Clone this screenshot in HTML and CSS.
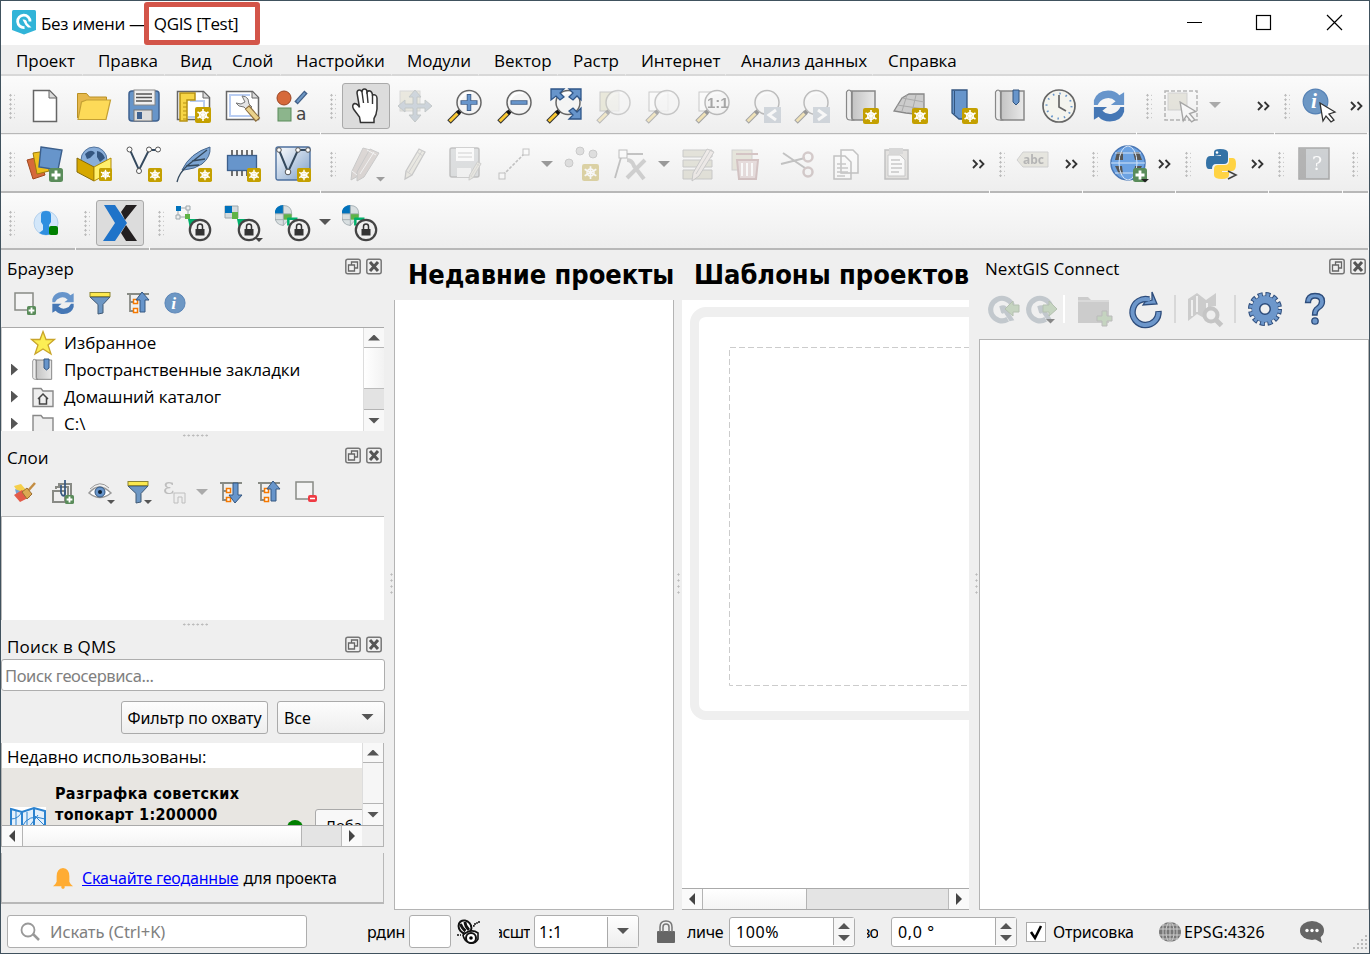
FILE: index.html
```html
<!DOCTYPE html>
<html lang="ru">
<head>
<meta charset="utf-8">
<title>QGIS</title>
<link rel="stylesheet" href="styles.css">
</head>
<body>
<svg width="0" height="0" class="defs">
  <defs>
    <linearGradient id="gb" x1="0" y1="0" x2="1" y2="1"><stop offset="0" stop-color="#fff"/><stop offset="1" stop-color="#7d9fc9"/></linearGradient>
    <linearGradient id="gg" x1="0" y1="0" x2="1" y2="0"><stop offset="0" stop-color="#bbb"/><stop offset="1" stop-color="#e9e9e9"/></linearGradient>
    <symbol id="new" viewBox="0 0 16 16"><rect width="16" height="16" rx="2" fill="#c4a000"/><path d="M8 2v12M2.500 5l11 6M13.500 5l-11 6" stroke="#fff" stroke-width="1.600"/><circle cx="8" cy="8" r="3.300" fill="none" stroke="#fff" stroke-width="1.400"/></symbol>
    <symbol id="plus" viewBox="0 0 14 14"><rect width="14" height="14" rx="2.500" fill="#5a8c5a"/><path d="M7 2.500v9M2.500 7h9" stroke="#fff" stroke-width="2.800"/></symbol>
    <symbol id="lens" viewBox="0 0 36 36"><path d="M2 34l10-10" stroke="#333" stroke-width="5"/><path d="M2.700 33.300l8-8" stroke="#fcca33" stroke-width="3"/><path d="M10.500 25.500l4-4" stroke="#111" stroke-width="4"/><circle cx="22" cy="14.500" r="12" fill="#f4f4f4" stroke="#666" stroke-width="1.500"/><path d="M13 12q4-9 13-7" stroke="#fff" stroke-width="2" fill="none"/></symbol>
    <symbol id="lock" viewBox="0 0 24 24"><circle cx="12" cy="12" r="10.200" fill="#efefef" stroke="#444" stroke-width="2.200"/><rect x="7.500" y="11" width="9" height="6.500" fill="#333"/><path d="M9.500 11V8.500a2.500 2.500 0 0 1 5 0V11" fill="none" stroke="#333" stroke-width="1.500"/></symbol>
    <symbol id="sync" viewBox="0 0 36 36"><path d="M2 12Q5 2 17 1.500q8 0 12 5l5-3V17H20l5-4q-5-5-11-3-6 2-8 7H2z" fill="#6795cb"/><path d="M34 24Q31 34 19 34.500q-8 0-12-5l-5 3V19h14l-5 4q5 5 11 3 6-2 8-7h4z" fill="#4577b5"/></symbol>
    <symbol id="tree" viewBox="0 0 24 24"><path d="M1 3h22M4 3v17h5M4 11h5" fill="none" stroke="#888b85" stroke-width="1.800"/><rect x="7.500" y="8.500" width="4" height="4" fill="#fff" stroke="#f57900" stroke-width="1.500"/><rect x="7.500" y="17.500" width="4" height="4" fill="#fff" stroke="#f57900" stroke-width="1.500"/></symbol>
    <symbol id="funnel" viewBox="0 0 24 24"><path d="M2 6h20l-7 7.500V22l-5 1v-9.500z" fill="#6d97c4" stroke="#415a75"/><rect x="2" y="1.500" width="20" height="4" fill="#fce94f" stroke="#8d8633"/></symbol>
    <symbol id="book" viewBox="0 0 36 36"><path d="M3 3h28v29H8V3z" fill="url(#gg)" stroke="#888" stroke-width="1.500"/><path d="M2.500 4q2.500-4 5 0v25q0 3 3 3H6q-3 0-3.500-3z" fill="#eee" stroke="#888" stroke-width="1.200"/></symbol>
    <symbol id="info" viewBox="0 0 24 24"><circle cx="12" cy="12" r="11" fill="#6d97c4" stroke="#5480b4"/><text x="8" y="18" font-family="Liberation Serif, serif" font-style="italic" font-weight="bold" font-size="19" fill="#fff">i</text></symbol>
    <symbol id="cursor" viewBox="0 0 18 22"><path d="M1 1l15 9-6 2 5 6-3 2-5-6-3 5z" fill="#fff" stroke="#333" stroke-width="1.300"/></symbol>
    <symbol id="float" viewBox="0 0 16 16"><rect x=".8" y=".8" width="14.400" height="14.400" rx="2" fill="none" stroke="#777" stroke-width="1.500"/><path d="M6.500 6V3.500h6v6H10M3.500 6.500h6v6h-6z" fill="none" stroke="#666" stroke-width="1.300"/></symbol>
    <symbol id="close" viewBox="0 0 16 16"><rect x=".8" y=".8" width="14.400" height="14.400" rx="2" fill="none" stroke="#777" stroke-width="1.500"/><path d="M4 3.500l8 9M12 3.500l-8 9" stroke="#555" stroke-width="3"/></symbol>
    <symbol id="pencil" viewBox="0 0 36 36"><path d="M9 25L22 3l6 3-13 23-7 4z" fill="#d9d5c0" stroke="#888" stroke-width="1.300"/><path d="M12 26L25 5M9 25l6 4M20 6l6 4" stroke="#999"/></symbol>
    <symbol id="ngq" viewBox="0 0 34 34"><path d="M22 28A12 12 0 1 1 27 13" fill="none" stroke="#c2c8cd" stroke-width="5.500"/><path d="M13 14q8-3 9 4l7 11-5 1-6-9q-1 2-3 0z" fill="#c2c8cd"/></symbol>
    <symbol id="half" viewBox="0 0 36 36"><path d="M0 13A10 10 0 0 1 10 3q10 0 10 10v3L10 27Q0 26 0 16z" fill="#d9dfe1" stroke="#9ca7ac"/><path d="M10 2.500V13H-.5Q0 3 10 2.500z" fill="#0072bc"/><path d="M10 13h10v7H10z" fill="#5fb346"/><path d="M10 3v24M0 13h20M0 20h10" stroke="#9ca7ac"/><path d="M15 19h12M16 18v9" stroke="#00b06b" stroke-width="3"/></symbol>
  </defs>
</svg>

<div class="window">
  <header class="titlebar">
    <svg class="logo" width="24" height="25" viewBox="0 0 24 25"><path d="M0 1.500Q0 0 1.500 0h21Q24 0 24 1.500V20l-12 4.500L0 20z" fill="#31b4d8"/><path d="M12.500 17.500A6.200 6.200 0 1 1 18 11.500" fill="none" stroke="#fff" stroke-width="2.800"/><path d="M10.500 9.500q4.500-.5 4.500 3.500l4.500 4.500H16L13.500 15z" fill="#fff"/></svg>
    <span class="caption">Без имени —&nbsp; QGIS [Test]</span>
    <svg class="winbtns" width="160" height="24" viewBox="0 0 160 24"><path d="M2 11.500h15" stroke="#000"/><rect x="71.500" y="4.500" width="14" height="14" fill="none" stroke="#000" stroke-width="1.200"/><path d="M142 4l15 15M157 4l-15 15" stroke="#000" stroke-width="1.200"/></svg>
    <div class="highlight"></div>
  </header>

  <nav class="menubar">
    <span class="m1">Проект</span><span class="m1">Правка</span><span class="m2">Вид</span><span class="m3">Слой</span><span class="m4">Настройки</span><span class="m5">Модули</span><span class="m6">Вектор</span><span class="m7">Растр</span><span class="m8">Интернет</span><span class="m9">Анализ данных</span><span class="m10">Справка</span>
  </nav>

  <div class="toolrow row1">
    <div class="bar w321"><i class="grip"></i>
      <b class="cell"><svg viewBox="0 0 36 36"><path d="M6.500 2.500h16l7 7v24h-23z" fill="#fff" stroke="#666" stroke-width="1.500"/><path d="M22 3v7h7" fill="#ddd" stroke="#666"/></svg></b>
      <b class="cell"><svg viewBox="0 0 36 36"><path d="M1.500 30V5.500h9l3 3.500h17v20" fill="#e6b84c" stroke="#b88f24"/><path d="M2 31.500L5.500 14l5-2h24l-4.500 19.500z" fill="#fdda58" stroke="#c4a034" stroke-width="1.200"/></svg></b>
      <b class="cell"><svg viewBox="0 0 36 36"><rect x="3" y="3" width="30" height="30" rx="3" fill="#6795c9" stroke="#3f6290" stroke-width="1.500"/><rect x="8" y="2" width="21" height="15" fill="#f0f0f0" stroke="#888"/><path d="M10 6h16M10 9.500h16M10 13h16" stroke="#555" stroke-width="1.500"/><rect x="8" y="22" width="18" height="11" fill="#ddd" stroke="#777"/><rect x="11" y="24" width="5" height="7" fill="#3f6290"/></svg></b>
      <b class="cell"><svg viewBox="0 0 36 36"><path d="M1.500 3.500h26l6 6v22h-32z" fill="#fff" stroke="#666" stroke-width="1.500"/><path d="M27 4v6h6" fill="#ddd" stroke="#666"/><path d="M14 13h14v16H12" stroke="#b9cdf2" stroke-width="2" fill="none"/><path d="M4 5h15v7h-8v21H4z" fill="#f7d546" stroke="#b79112" stroke-width="1.500"/><path d="M7 15h4M7 19h4M7 23h4M7 27h4M7 31h4" stroke="#b79112"/><use href="#new" x="19" y="19" width="16" height="16"/></svg></b>
      <b class="cell"><svg viewBox="0 0 36 36"><path d="M1.500 3.500h26l6 6v22h-32z" fill="#fff" stroke="#666" stroke-width="1.500"/><path d="M27 4v6h6" fill="#ddd" stroke="#666"/><path d="M25 7H5v21h21" stroke="#b9cdf2" stroke-width="2" fill="none"/><path d="M17 8q4 0 6 3l1 5 3 3-5 3-3-3q-6 0-8-4l5 1 4-2z" fill="#e4e4e4" stroke="#777"/><path d="M22 19l11 13" stroke="#8b6d3e" stroke-width="6"/><path d="M22.500 20l10 11" stroke="#ead28b" stroke-width="4"/></svg></b>
      <b class="cell"><svg viewBox="0 0 36 36"><circle cx="9" cy="10" r="7" fill="#d6693a" stroke="#9b4522"/><path d="M21 15L31 4" stroke="#415f88" stroke-width="4.500"/><path d="M22 14l8-9" stroke="#6d97c4" stroke-width="2"/><rect x="3" y="20" width="13" height="13" fill="#8cb58c" stroke="#5a8c5a"/><text x="21" y="32" font-family="DejaVu Sans" font-weight="normal" font-size="17" fill="#444">a</text></svg></b>
    </div>
    <div class="bar w816"><i class="grip"></i>
      <b class="cell pressed"><svg viewBox="0 0 36 36"><path d="M12.500 34.500L11.500 29 5.500 21q-2-4 1-5.500 3 0 5 4L9 5q0-3 2.500-3 1.500 0 2.500 2 0-3 2.500-3T19 4q1-1.500 3-1 2 .5 2.500 4 4-1 4.500 3v11q-.500 6-3 9.500v4z" fill="#fff" stroke="#333" stroke-width="1.500"/><path d="M14 4l1.500 11M19 4l1 11M24.500 7v9" stroke="#333" stroke-width="1.400"/></svg></b>
      <b class="cell dim"><svg viewBox="0 0 36 36"><rect x="3" y="3" width="20" height="20" fill="#d8d5b4" stroke="#aaa"/><path d="M18 2l6 7h-4v7h8v-4l7 6-7 6v-4h-8v7h4l-6 7-6-7h4v-7H8v4l-7-6 7-6v4h8V9h-4z" fill="#8fa6bf" stroke="#788"/></svg></b>
      <b class="cell"><svg viewBox="0 0 36 36"><use href="#lens" width="36" height="36"/><path d="M22 6v17M13.500 14.500h17" stroke="#415f88" stroke-width="4.500"/><path d="M22 7v15M14.500 14.500h15" stroke="#6795cb" stroke-width="2.800"/></svg></b>
      <b class="cell"><svg viewBox="0 0 36 36"><use href="#lens" width="36" height="36"/><path d="M13.500 14.500h17" stroke="#415f88" stroke-width="4.500"/><path d="M14.500 14.500h15" stroke="#6795cb" stroke-width="2.800"/></svg></b>
      <b class="cell"><svg viewBox="0 0 36 36"><use href="#lens" width="36" height="36"/><path d="M5 1h13l-4 4 4 4-4 3-4-4-5 4zM35 1H23l4 4-4 4 4 3 4-4 4 4zM35 31H23l4-4-4-4 4-3 4 4 4-4z" fill="#6795cb" stroke="#2f5688" stroke-width="1.300"/></svg></b>
      <b class="cell dim"><svg viewBox="0 0 36 36"><rect x="4" y="4" width="19" height="19" fill="#d8d5a4" stroke="#888"/><use href="#lens" width="36" height="36" opacity=".7"/></svg></b>
      <b class="cell dim"><svg viewBox="0 0 36 36"><rect x="4" y="4" width="19" height="19" fill="#fff" stroke="#888"/><use href="#lens" width="36" height="36" opacity=".8"/></svg></b>
      <b class="cell dim"><svg viewBox="0 0 36 36"><rect x="4" y="4" width="19" height="19" fill="#fff" stroke="#888"/><use href="#lens" width="36" height="36"/><text x="12" y="20" font-family="Liberation Sans" font-weight="bold" font-size="15" fill="#333">1:1</text></svg></b>
      <b class="cell dim"><svg viewBox="0 0 36 36"><use href="#lens" width="36" height="36"/><rect x="19" y="19" width="17" height="16" fill="#99acc0"/><path d="M31 22l-7 5 7 5" fill="none" stroke="#fff" stroke-width="3"/></svg></b>
      <b class="cell dim"><svg viewBox="0 0 36 36"><use href="#lens" width="36" height="36"/><rect x="19" y="19" width="17" height="16" fill="#99acc0"/><path d="M24 22l7 5-7 5" fill="none" stroke="#fff" stroke-width="3"/></svg></b>
      <b class="cell"><svg viewBox="0 0 36 36"><use href="#book" width="36" height="36"/><use href="#new" x="19" y="20" width="16" height="16"/></svg></b>
      <b class="cell"><svg viewBox="0 0 36 36"><path d="M1 23l8-13 7-4h15v21L13 25z" fill="#ccc" stroke="#888" stroke-width="1.300"/><path d="M9 10l22 4M4 17l27 4M14 7l-5 16M23 7l-4 17" stroke="#aaa"/><use href="#new" x="19" y="20" width="16" height="16"/></svg></b>
      <b class="cell"><svg viewBox="0 0 36 36"><path d="M9 2h15v29h-8L9 25z" fill="#6795cb" stroke="#345680" stroke-width="1.300"/><path d="M11.500 3v23" stroke="#345680"/><use href="#new" x="19" y="20" width="16" height="16"/></svg></b>
      <b class="cell"><svg viewBox="0 0 36 36"><use href="#book" width="36" height="36"/><path d="M20 2h6v12l-3 3-3-3z" fill="#6795cb" stroke="#345680"/></svg></b>
      <b class="cell"><svg viewBox="0 0 36 36"><circle cx="17" cy="18" r="16" fill="#f4f4ee" stroke="#666" stroke-width="1.700"/><circle cx="17" cy="18" r="12.500" fill="none" stroke="#6795cb" stroke-width="2" stroke-dasharray="1.500 5.040"/><path d="M17 7v12l7 4" fill="none" stroke="#666" stroke-width="1.700"/></svg></b>
      <b class="cell"><svg viewBox="0 0 36 36"><use href="#sync" width="34" height="36"/></svg></b>
    </div>
    <div class="bar w138"><i class="grip"></i>
      <b class="cell dim"><svg viewBox="0 0 36 36"><rect x="1" y="3" width="32" height="29" fill="none" stroke="#555" stroke-width="1.500" stroke-dasharray="4 2"/><rect x="4" y="5" width="19" height="17" fill="#cdc9ae" stroke="#999"/><use href="#cursor" x="15" y="13" width="19" height="23"/></svg></b>
      <i class="drop"><svg viewBox="0 0 12 7"><path d="M0 0h12L6 6z" fill="#aaa"/></svg></i>
      <i class="more"><svg viewBox="0 0 13 10"><path d="M1 1l4 4-4 4M7.500 1l4 4-4 4" fill="none" stroke="#333" stroke-width="1.800"/></svg></i>
    </div>
    <div class="bar w93"><i class="grip"></i>
      <b class="cell"><svg viewBox="0 0 36 36"><use href="#info" x="0" y="0" width="27" height="27"/><use href="#cursor" x="16" y="14" width="20" height="22"/></svg></b>
      <i class="more"><svg viewBox="0 0 13 10"><path d="M1 1l4 4-4 4M7.500 1l4 4-4 4" fill="none" stroke="#333" stroke-width="1.800"/></svg></i>
    </div>
  </div>

  <div class="toolrow row2">
    <div class="bar w321"><i class="grip"></i>
      <b class="cell"><svg viewBox="0 0 36 36"><path d="M0 14l12-3 6 18-12 4z" fill="#d6693a" stroke="#a04820"/><path d="M6 7l13-2 3 20-12 3z" fill="#edc01c" stroke="#9b7a0c"/><path d="M14 1l21 3-4 20-19-3z" fill="#6795cb" stroke="#3c5f8c" stroke-width="1.400"/><use href="#plus" x="22" y="22" width="14" height="14"/></svg></b>
      <b class="cell"><svg viewBox="0 0 36 36"><circle cx="18" cy="14" r="13" fill="#89aeda" stroke="#52749e"/><path d="M9 8q6-6 10-1l-5 5-3 1zM21 5q6 1 8 7l-5 4-3-5z" fill="#345680"/><path d="M1 12l17 9v14L1 26z" fill="#d6a800" stroke="#876b09"/><path d="M18 21l17-9v14l-17 9z" fill="#fff06b" stroke="#b18a05"/><use href="#new" x="23" y="22" width="13" height="13"/></svg></b>
      <b class="cell"><svg viewBox="0 0 36 36"><path d="M4 4l9 20L23 4h10" fill="none" stroke="#34495e" stroke-width="1.900"/><g fill="#fff" stroke="#555"><circle cx="3.500" cy="3.500" r="2.500"/><circle cx="13" cy="25" r="2.500"/><circle cx="23" cy="3.500" r="2.500"/><circle cx="32" cy="3.500" r="2.500"/></g><use href="#new" x="22" y="22" width="14" height="14"/></svg></b>
      <b class="cell"><svg viewBox="0 0 36 36"><path d="M6 24Q14 7 34 1q1 10-8 17-7 5-18 6z" fill="#7da5d3" stroke="#46668d"/><path d="M1 36Q3 27 12 19L31 4M16 15l13-2M10 20l13-1" fill="none" stroke="#34495e" stroke-width="1.300"/><use href="#new" x="22" y="22" width="14" height="14"/></svg></b>
      <b class="cell"><svg viewBox="0 0 36 36"><path d="M7 4v26M12 4v26M17 4v26M22 4v26M27 4v26" stroke="#444" stroke-width="1.500"/><rect x="2.500" y="9.500" width="29" height="15" fill="#6795cb" stroke="#3c5f8c" stroke-width="1.300"/><use href="#new" x="22" y="22" width="14" height="14"/></svg></b>
      <b class="cell"><svg viewBox="0 0 36 36"><rect x="1" y="1" width="34" height="33" rx="2" fill="url(#gb)" stroke="#4c6f9d" stroke-width="1.400"/><path d="M4 4l9 22L23 4h9" fill="none" stroke="#34495e" stroke-width="2"/><g fill="#fff" stroke="#555"><circle cx="4" cy="4" r="2.300"/><circle cx="13" cy="26" r="2.800"/><circle cx="23" cy="4" r="2.300"/><circle cx="33" cy="4" r="2.300"/></g><use href="#new" x="22" y="22" width="14" height="14"/></svg></b>
    </div>
    <div class="bar w669"><i class="grip"></i>
      <b class="cell dim"><svg viewBox="0 0 36 36"><g fill="#b9a7a0" stroke="#888"><path d="M4 25L15 2l7 2-12 26-7 4z"/><path d="M9 26L22 3l9 4-15 24-7 4z"/></g><path d="M12 28L26 6M19 4l9 5M4 25l5 4" stroke="#eee"/><path d="M28 31h9l-4.500 4.500z" fill="#222"/></svg></b>
      <b class="cell dim"><svg viewBox="0 0 36 36"><use href="#pencil" width="36" height="36"/></svg></b>
      <b class="cell dim"><svg viewBox="0 0 36 36"><rect x="3" y="2" width="29" height="29" rx="2" fill="#b8bec3" stroke="#777" stroke-width="1.500"/><path d="M9 2h18v13H9z" fill="#fff"/><path d="M11 7h14M11 11h14" stroke="#999"/><rect x="10" y="22" width="14" height="9" fill="#eee"/><use href="#pencil" x="17" y="14" width="22" height="22"/></svg></b>
      <b class="cell dim"><svg viewBox="0 0 36 36"><path d="M6 29L28 7" stroke="#777" stroke-width="1.600" stroke-dasharray="3 1.500"/><rect x="2" y="27" width="6" height="6" fill="#fff" stroke="#777"/><rect x="26" y="3" width="6" height="6" fill="#fff" stroke="#777"/></svg></b>
      <i class="drop"><svg viewBox="0 0 12 7"><path d="M0 0h12L6 6z" fill="#999"/></svg></i>
      <b class="cell dim"><svg viewBox="0 0 36 36"><g fill="#bbb" stroke="#888"><circle cx="16" cy="5" r="4"/><circle cx="29" cy="8" r="4"/><circle cx="5" cy="17" r="4"/></g><use href="#new" x="18" y="18" width="17" height="17"/></svg></b>
      <b class="cell dim"><svg viewBox="0 0 36 36"><path d="M2 32L9 8h21" fill="none" stroke="#777" stroke-width="1.800"/><rect x="6" y="4" width="8" height="8" fill="#fff" stroke="#666"/><path d="M14 14q5 0 7 6l10 13M32 14L14 32" stroke="#999" stroke-width="4" fill="none"/></svg></b>
      <i class="drop"><svg viewBox="0 0 12 7"><path d="M0 0h12L6 6z" fill="#999"/></svg></i>
      <b class="cell dim"><svg viewBox="0 0 36 36"><path d="M3 4h29v7H3zM3 14h29v7H3zM3 24h29v9H3z" fill="#c9c5a8" stroke="#888"/><path d="M13 27L27 3l7 3-15 24-7 5z" fill="#e4d6cf" stroke="#888"/><path d="M16 28L30 5" stroke="#999"/></svg></b>
      <b class="cell dim"><svg viewBox="0 0 36 36"><rect x="2" y="4" width="20" height="20" fill="#d0cca9" stroke="#999"/><path d="M6 8h22M7 14h21l-2 19H9z" fill="#d9b5b5" stroke="#b07777" stroke-width="2"/><path d="M12 17v13M17 17v13M22 17v13" stroke="#fff" stroke-width="2"/></svg></b>
      <b class="cell dim"><svg viewBox="0 0 36 36"><path d="M3 7l22 15M1 18l24-6" stroke="#777" stroke-width="2"/><circle cx="28" cy="11" r="4.500" fill="none" stroke="#a88" stroke-width="2.500"/><circle cx="28" cy="26" r="4.500" fill="none" stroke="#a88" stroke-width="2.500"/></svg></b>
      <b class="cell dim"><svg viewBox="0 0 36 36"><path d="M12 4h12l5 5v18H12zM5 10h11l6 6v17H5z" fill="#fff" stroke="#777" stroke-width="1.500"/><path d="M8 18h9M8 22h11M8 26h11M8 30h8" stroke="#888" stroke-width="1.300"/></svg></b>
      <b class="cell dim"><svg viewBox="0 0 36 36"><rect x="6" y="4" width="23" height="29" fill="#c9c5be" stroke="#777" stroke-width="1.500"/><path d="M9 9h12l5 5v16H9z" fill="#fff" stroke="#888"/><rect x="10" y="2" width="14" height="6" fill="#aaa"/><path d="M12 14h9M12 18h11M12 22h11M12 26h8" stroke="#888" stroke-width="1.300"/></svg></b>
      <i class="more"><svg viewBox="0 0 13 10"><path d="M1 1l4 4-4 4M7.500 1l4 4-4 4" fill="none" stroke="#333" stroke-width="1.800"/></svg></i>
    </div>
    <div class="bar w93 lab"><i class="grip"></i>
      <b class="cell dim"><svg viewBox="0 0 36 36"><path d="M2 14l6-8h25v15H8z" fill="#d0cdb7" stroke="#999"/><text x="8" y="18" font-family="Noto Sans" font-weight="bold" font-size="12" fill="#555">abc</text></svg></b>
      <i class="more"><svg viewBox="0 0 13 10"><path d="M1 1l4 4-4 4M7.500 1l4 4-4 4" fill="none" stroke="#333" stroke-width="1.800"/></svg></i>
    </div>
    <div class="bar w93"><i class="grip"></i>
      <b class="cell"><svg viewBox="0 0 36 36"><circle cx="18" cy="17" r="17" fill="#6ca2e2" stroke="#4b78b5" stroke-width="1.500"/><path d="M7 6h6v8H5zM23 6h6l3 8h-7zM5 20h7l1 8H9zM25 20h7l-4 8h-4z" fill="#555"/><path d="M1 17h34M5 7h26M5 27h26" stroke="#d4e5f9"/><ellipse cx="18" cy="17" rx="9" ry="17" fill="none" stroke="#d4e5f9"/><use href="#plus" x="23" y="22" width="14" height="14"/><path d="M31 33h8l-4 3.500z" fill="#222"/></svg></b>
      <i class="more"><svg viewBox="0 0 13 10"><path d="M1 1l4 4-4 4M7.500 1l4 4-4 4" fill="none" stroke="#333" stroke-width="1.800"/></svg></i>
    </div>
    <div class="bar w93"><i class="grip"></i>
      <b class="cell"><svg viewBox="0 0 36 36"><path d="M11 10V6q0-3 6-3 8 0 8 4v7q0 4-4 4h-8q-4 0-4 5H6q-3 0-3-6 0-7 4-7h11V9z" fill="#3472a6"/><path d="M26 12h4q3 0 3 6 0 7-4 7H19v1h7v3q0 4-7 4-8 0-8-4v-6q0-4 4-4h7q4 0 4-4z" fill="#ffd343"/><circle cx="14" cy="6.500" r="1.300" fill="#fff"/><path d="M25 25l8 4-8 4" fill="none" stroke="#444" stroke-width="1.600"/></svg></b>
      <i class="more"><svg viewBox="0 0 13 10"><path d="M1 1l4 4-4 4M7.500 1l4 4-4 4" fill="none" stroke="#333" stroke-width="1.800"/></svg></i>
    </div>
    <div class="bar w74"><i class="grip"></i>
      <b class="cell faded"><svg viewBox="0 0 36 36"><rect x="3" y="2" width="30" height="31" fill="#b3b8bc" stroke="#777" stroke-width="1.500"/><path d="M4 3h6v29H4z" fill="#888"/><text x="16" y="24" font-family="DejaVu Serif" font-weight="normal" font-size="19" fill="#fff">?</text></svg></b>
    </div>
    <div class="bar w25"><i class="grip"></i></div>
  </div>

  <div class="toolrow row3">
    <div class="bar w76"><i class="grip"></i>
      <b class="cell"><svg viewBox="0 0 36 36"><circle cx="19" cy="18" r="12" fill="#d3e7fa" stroke="#b5d1ec"/><path d="M14 10q0-4 5-4t5 4v7l-2 3v5l4 3q-7 4-14 0l4-3v-5l-2-3z" fill="#2f8fe0"/><rect x="22" y="21" width="9" height="9" rx="2" fill="#008000"/></svg></b>
    </div>
    <div class="bar w74"><i class="grip"></i>
      <b class="cell pressed"><svg viewBox="0 0 36 36"><path d="M2 0h11l12 18-12 18H1l12-18z" fill="#1f73c9"/><path d="M35 0H24l-5 7 4 8zM35 36H24l-5-8 5-8z" fill="#231f20"/></svg></b>
    </div>
    <div class="bar w1220"><i class="grip"></i>
      <b class="cell"><svg viewBox="0 0 36 36"><path d="M2 3h10v9H2z" fill="none" stroke="#9ca7ac"/><path d="M0 1h5v5H0z" fill="#0072bc"/><path d="M10 1h4v4h-4zM0 10h4v4H0z" fill="#eee" stroke="#9ca7ac"/><path d="M9 9h5v5H9z" fill="#5fb346"/><path d="M12 14h11l-9 10z" fill="#00b06b"/><use href="#lock" x="12" y="13" width="24" height="24"/></svg></b>
      <b class="cell"><svg viewBox="0 0 36 36"><path d="M0 1h13v12H0z" fill="#d3dadd" stroke="#9ca7ac"/><path d="M0 1h7v7H0z" fill="#0072bc"/><path d="M7 7h6v7H7z" fill="#5fb346"/><path d="M12 14h11l-9 10z" fill="#00b06b"/><use href="#lock" x="12" y="13" width="24" height="24"/><path d="M30 33h8l-4 4z" fill="#444"/></svg></b>
      <b class="cell"><svg viewBox="0 0 36 36"><use href="#half" x="0" y="-2" width="30" height="30"/><use href="#lock" x="12" y="13" width="24" height="24"/></svg></b>
      <i class="drop dark"><svg viewBox="0 0 12 7"><path d="M0 0h12L6 6z" fill="#555"/></svg></i>
      <b class="cell"><svg viewBox="0 0 36 36"><use href="#half" x="0" y="-2" width="30" height="30"/><use href="#lock" x="12" y="13" width="24" height="24"/></svg></b>
    </div>
  </div>

  <main class="work">
    <section class="left">
      <div class="docktitle"><span>Браузер</span><svg class="dbtn"><use href="#float"/></svg><svg class="dbtn"><use href="#close"/></svg></div>
      <div class="mini browsertools">
        <svg viewBox="0 0 24 24"><rect x="2" y="2" width="18" height="17" fill="#f4f4f4" stroke="#888a85" stroke-width="1.500"/><use href="#plus" x="14" y="15" width="9" height="9"/></svg>
        <svg viewBox="0 0 24 24"><use href="#sync" width="24" height="24"/></svg>
        <svg viewBox="0 0 24 24"><use href="#funnel" width="24" height="24"/></svg>
        <svg viewBox="0 0 24 24"><use href="#tree" width="24" height="24"/><path d="M16 1l7 8h-4v12h-5V9h-4z" fill="#6795cb" stroke="#345680"/></svg>
        <svg viewBox="0 0 24 24"><use href="#info" x="1" y="1" width="22" height="22"/></svg>
      </div>
      <div class="tree">
        <div class="treelist">
          <div class="node"><i class="tw"></i><svg viewBox="0 0 24 24"><path d="M12 .5l3 8h8.500l-6.500 5.500 3 9-8-5-8 5 3-9L.5 8.500H9z" fill="#fcee54" stroke="#c9a52b" stroke-width="1.300"/></svg><span>Избранное</span></div>
          <div class="node"><i class="tw on"></i><svg viewBox="0 0 24 24"><use href="#book" width="24" height="24"/><path d="M13 1h5v9l-2.500 2L13 10z" fill="#6795cb" stroke="#345680"/></svg><span class="long">Пространственные закладки</span></div>
          <div class="node"><i class="tw on"></i><svg viewBox="0 0 24 24"><path d="M2 21.500v-18h8l2 2.500h10v15.500z" fill="#eee" stroke="#888" stroke-width="1.400"/><path d="M7 14l5-5 5 5M8.500 13v6h7v-6" fill="none" stroke="#444" stroke-width="1.500"/></svg><span class="long">Домашний каталог</span></div>
          <div class="node"><i class="tw on"></i><svg viewBox="0 0 24 24"><path d="M2 24V3.500h8l2 2.500h10v18z" fill="#eee" stroke="#888" stroke-width="1.400"/></svg><span class="drive">C:\</span></div>
        </div>
        <div class="vscroll"><div class="sbtn up"></div><div class="thumb"></div><div class="sgap"></div><div class="sbtn down"></div></div>
      </div>
      <div class="splitdots"></div>
      <div class="docktitle"><span>Слои</span><svg class="dbtn"><use href="#float"/></svg><svg class="dbtn"><use href="#close"/></svg></div>
      <div class="mini layertools">
        <svg viewBox="0 0 24 24"><path d="M1 6l7-2 6 7-8 3z" fill="#f5cf4b"/><path d="M2 9l5 2 2 5-5 1z" fill="#77a4d6"/><path d="M1 15l8-5 8 7-10 5z" fill="#e35b49"/><path d="M14 12l8-9" stroke="#c38d43" stroke-width="2.500"/><path d="M9 12l5-4 5 6-5 5z" fill="#dba952" stroke="#9b6d30"/></svg>
        <svg viewBox="0 0 24 24"><path d="M2 22V11h12v11zM5 9V7h12v13M8 6V4h12v14" fill="none" stroke="#888a85" stroke-width="2"/><path d="M14 0v14q-2 4-4-1V5" fill="none" stroke="#345680" stroke-width="1.700"/><use href="#plus" x="14" y="15" width="9" height="9"/></svg>
        <svg viewBox="0 0 24 24"><path d="M1 13q10-12 22 0-11 9-22 0z" fill="#fff" stroke="#999" stroke-width="1.500"/><circle cx="12" cy="12" r="5" fill="#6795cb" stroke="#34567e"/><circle cx="12" cy="12" r="2" fill="#123"/><path d="M2 9q10-10 19-1" stroke="#999" fill="none"/><path d="M19 20h8l-4 4z" fill="#555"/></svg>
        <svg viewBox="0 0 24 24"><use href="#funnel" width="24" height="24"/><path d="M18 20h8l-4 4z" fill="#555"/></svg>
        <svg viewBox="0 0 24 24" opacity=".7"><text x="0" y="14" font-family="DejaVu Serif" font-size="22" fill="#aaa">ε</text><path d="M11 13h11v10h-3v-6h-4v6h-4z" fill="#eee" stroke="#aaa"/></svg>
        <i class="mdrop"><svg viewBox="0 0 12 7"><path d="M0 0h12L6 6z" fill="#aaa"/></svg></i>
        <svg viewBox="0 0 24 24"><use href="#tree" width="24" height="24"/><path d="M16 23l7-8h-4V3h-5v12h-4z" fill="#6795cb" stroke="#345680"/></svg>
        <svg viewBox="0 0 24 24"><use href="#tree" width="24" height="24"/><path d="M16 1l7 8h-4v12h-5V9h-4z" fill="#6795cb" stroke="#345680"/></svg>
        <svg viewBox="0 0 24 24"><rect x="2" y="2" width="17" height="17" fill="#f4f4f4" stroke="#888a85" stroke-width="1.500"/><rect x="14" y="15" width="9" height="7" rx="2" fill="#ef3b44"/><path d="M16 18.500h5" stroke="#fff" stroke-width="1.500"/></svg>
      </div>
      <div class="layerbox"></div>
      <div class="splitdots"></div>
      <div class="docktitle"><span class="qms">Поиск в QMS</span><svg class="dbtn"><use href="#float"/></svg><svg class="dbtn"><use href="#close"/></svg></div>
      <div class="field geosearch"><span>Поиск геосервиса...</span></div>
      <div class="filters"><div class="button"><span>Фильтр по охвату</span></div><div class="combo"><span>Все</span><svg viewBox="0 0 12 7"><path d="M0 0h12L6 6z" fill="#555"/></svg></div></div>
      <div class="results">
        <div class="restop">
          <div class="reslist">
            <div class="recent">Недавно использованы:</div>
            <div class="service">
              <svg class="map" viewBox="0 0 36 36"><rect width="36" height="36" fill="#fff"/><path d="M1 2l11 3 12-4 11 3v30H1zM12 5v30M24 1v34" fill="#e4f0fb" stroke="#2b82cf" stroke-width="2"/><path d="M1 12q8 0 11-8M6 4v30M12 20q6-14 23-8M24 8l10 10M17 5v25M13 28l15-20" stroke="#2b82cf" fill="none"/></svg>
              <div class="sname"><div class="n1">Разграфка советских</div><div class="n2">топокарт 1:200000</div></div>
              <i class="dot"></i><div class="add">Добавить</div>
            </div>
          </div>
          <div class="vscroll short"><div class="sbtn up"></div><div class="thumb2"></div><div class="sbtn down"></div></div>
        </div>
        <div class="hscroll"><div class="hb l"></div><div class="hthumb w279"></div><div class="htrack"></div><div class="hb r"></div><div class="corner"></div></div>
      </div>
      <div class="notice"><svg viewBox="0 0 22 24" width="20" height="22"><path d="M11 1q-7 1-7 9v6q-1 3-4 5h22q-3-2-4-5v-6q0-8-7-9z" fill="#ffac33"/><circle cx="11" cy="22" r="2" fill="#ffac33"/></svg><span class="link">Скачайте геоданные</span><span class="rest">для проекта</span></div>
    </section>
    <div class="vdots"></div>
    <section class="recentp">
      <h1 class="h-a">Недавние проекты</h1>
      <div class="box rbox"></div>
    </section>
    <div class="vdots thin"></div>
    <section class="templates">
      <h1 class="h-b">Шаблоны проектов</h1>
      <div class="tbox"><div class="card"><svg width="241" height="340"><path d="M241 .5H.5v338H241" fill="none" stroke="#ccc" stroke-dasharray="6 3"/></svg></div>
      </div>
      <div class="hscroll tscroll"><div class="hb l"></div><div class="hthumb w104"></div><div class="htrack"></div><div class="hb r"></div></div>
    </section>
    <div class="vdots right"></div>
    <section class="connect">
      <div class="docktitle"><span class="ngc">NextGIS Connect</span><svg class="dbtn"><use href="#float"/></svg><svg class="dbtn"><use href="#close"/></svg></div>
      <div class="ngtools">
        <svg class="g1" viewBox="0 0 34 34"><use href="#ngq" width="32" height="34"/><path d="M32 13v7h-6v4l-8-7 8-8v4z" fill="#c5d4c0" stroke="#b4c0b0"/></svg>
        <svg class="g2" viewBox="0 0 34 34"><use href="#ngq" width="32" height="34"/><path d="M18 13v7h6v4l8-7-8-8v4z" fill="#c5d4c0" stroke="#b4c0b0"/><path d="M21 27h9l-4.500 4.500z" fill="#888"/></svg>
        <i class="sep s1"></i>
        <svg class="g3" viewBox="0 0 36 34"><path d="M1 31V5h10l3 3h18v23z" fill="#ccc"/><path d="M1 9h31" stroke="#e6e6e6"/><path d="M25 19h5v5h5v5h-5v5h-5v-5h-5v-5h5z" fill="#c5d4c0" stroke="#bbb"/></svg>
        <svg class="g4" viewBox="0 0 34 36"><path d="M30.500 20A13 13 0 1 1 21 8.500" fill="none" stroke="#2d4c7b" stroke-width="6.500"/><path d="M17 11l7-2V1l5 12-14 1z" fill="#6d97cb" stroke="#2d4c7b" stroke-width="1.300"/><path d="M30.500 21A13 13 0 1 1 22 8.800" fill="none" stroke="#6d97cb" stroke-width="4"/></svg>
        <i class="sep s2"></i>
        <svg class="g5" viewBox="0 0 36 36"><path d="M1 8l9-6 9 7 10-7v13q-11 0-12 12l-7-4-9 7z" fill="#ccc"/><path d="M5 9v16M10 5v16M20 12v6" stroke="#efefef" stroke-width="2"/><circle cx="24" cy="24" r="6.500" fill="#efefef" stroke="#c5c5c5" stroke-width="4"/><path d="M28.500 28.500l6 6" stroke="#c5c5c5" stroke-width="5"/></svg>
        <i class="sep s3"></i>
        <svg class="g6" viewBox="0 0 36 36"><circle cx="18" cy="18" r="14.500" fill="none" stroke="#2d4c7b" stroke-width="5" stroke-dasharray="4.900 2.692"/><circle cx="18" cy="18" r="9" fill="none" stroke="#2d4c7b" stroke-width="9"/><circle cx="18" cy="18" r="14.200" fill="none" stroke="#6d97cb" stroke-width="3.600" stroke-dasharray="3 4.435" stroke-dashoffset="-.9"/><circle cx="18" cy="18" r="9.500" fill="none" stroke="#6d97cb" stroke-width="7"/></svg>
        <svg class="g7" viewBox="0 0 22 34"><path d="M1.500 10.500Q2 1.500 11 1.500q9.500 0 9.500 8 0 5-5 8-2.500 1.500-2.500 5.500H8.500q0-6 4-8.500 3-2 3-5 0-3.500-4.500-3.500t-4.500 4.500z" fill="#6d97cb" stroke="#2d4c7b" stroke-width="1.300"/><circle cx="11" cy="29" r="3.200" fill="#6d97cb" stroke="#2d4c7b" stroke-width="1.300"/></svg>
      </div>
      <div class="box cbox"></div>
    </section>
  </main>

  <footer class="status">
    <div class="field sfind"><svg viewBox="0 0 20 20"><circle cx="8" cy="8" r="6.500" fill="none" stroke="#999" stroke-width="1.800"/><path d="M13 12l6 6" stroke="#999" stroke-width="2.500"/></svg><span>Искать (Ctrl+K)</span></div>
    <span class="t coord">рдин</span>
    <div class="field cf"></div>
    <svg class="mouse" viewBox="0 0 24 24"><ellipse cx="8" cy="7" rx="7" ry="6" transform="rotate(50 8 7)" fill="#fff" stroke="#111" stroke-width="2"/><path d="M3.500 4q2 5 5 7M8 2q0 4 4 8" stroke="#111" stroke-width="2.800" fill="none"/><path d="M6 15Q14 8 21 13v6q-3 5-8 4-6-2-7-8z" fill="#fff" stroke="#111" stroke-width="1.600"/><circle cx="14" cy="18" r="5" fill="#fff" stroke="#111" stroke-width="2"/><circle cx="14" cy="18" r="1.800"/><path d="M13 6h4V4h3V2h3M0 15h4" stroke="#111" stroke-width="1.300" stroke-dasharray="2 1" fill="none"/></svg>
    <span class="t scale"><span>асшт</span></span>
    <div class="field scombo"><span>1:1</span><i><svg viewBox="0 0 12 7"><path d="M0 0h12L6 6z" fill="#555"/></svg></i></div>
    <svg class="padlock" viewBox="0 0 20 24"><rect x="1" y="11" width="18" height="12" rx="1" fill="#666"/><path d="M4 12V7q0-6 6-6t6 6v5M7 12V7q0-3 3-3t3 3v5" fill="none" stroke="#777" stroke-width="1.500"/></svg>
    <span class="t zoomt">личе</span>
    <div class="field spin z"><span>100%</span><i><svg viewBox="0 0 12 20"><path d="M0 7h12L6 1zM0 13h12l-6 6z" fill="#555"/></svg></i></div>
    <span class="t rot"><span>зо</span></span>
    <div class="field spin r"><span>0,0 °</span><i><svg viewBox="0 0 12 20"><path d="M0 7h12L6 1zM0 13h12l-6 6z" fill="#555"/></svg></i></div>
    <div class="check"><svg viewBox="0 0 16 16"><path d="M3 8l4 6 6-12" fill="none" stroke="#000" stroke-width="2.500"/></svg></div>
    <span class="t render">Отрисовка</span>
    <svg class="globe" viewBox="0 0 24 22"><ellipse cx="12" cy="11" rx="11" ry="10" fill="#777"/><path d="M1 8h22M1 14h22M4 4h16M4 18h16M12 1v20M5 3v16M19 3v16" stroke="#ccc"/><ellipse cx="12" cy="11" rx="4" ry="10" fill="none" stroke="#ccc"/></svg>
    <span class="t epsg">EPSG:4326</span>
    <svg class="bubble" viewBox="0 0 24 24"><ellipse cx="12" cy="10.500" rx="12" ry="9.500" fill="#666"/><path d="M13 18l9 5-2-8z" fill="#666"/><circle cx="7" cy="10.500" r="1.700" fill="#fff"/><circle cx="12" cy="10.500" r="1.700" fill="#fff"/><circle cx="17" cy="10.500" r="1.700" fill="#fff"/></svg>
    <svg class="sizegrip" viewBox="0 0 16 16"><path d="M13 2h2M9 6h2M13 6h2M5 10h2M9 10h2M13 10h2M1 14h2M5 14h2M9 14h2M13 14h2" stroke="#bbb" stroke-width="2"/></svg>
  </footer>
</div>
</body>
</html>
```
FILE: styles.css
```css
* { box-sizing: border-box; }
body { margin: 0; font-family: "Open Sans", "Noto Sans", sans-serif; font-size: 17px; color: #000; }
.defs { position: absolute; }
svg { display: block; overflow: visible; flex: none; }
.window { width: 1370px; height: 954px; background: #efefef; border: 1px solid #40525e; display: flex; flex-direction: column; overflow: hidden; white-space: nowrap; }

.titlebar { position: relative; height: 44px; background: #fff; display: flex; align-items: center; padding-left: 11px; flex: none; }
.logo { margin-top: -2px; }
.caption { margin-left: 5px; flex: 1; font-size: 17px; letter-spacing: -.34px; }
.winbtns { margin-right: 24px; }
.highlight { position: absolute; left: 143px; top: 1px; width: 116px; height: 43px; border: 5px solid #d35549; border-radius: 3px; z-index: 2; }

.menubar { height: 31px; display: flex; flex: none; line-height: 31px; letter-spacing: -.05px; }
.menubar span { padding-left: 15px; border-right: 1px solid #efefef; border-bottom: 2px solid #d8d8d8; line-height: 31px; }
.m1 { width: 82px; } .m2 { width: 52px; } .m3 { width: 64px; } .m4 { width: 111px; } .m5 { width: 87px; } .m6 { width: 79px; } .m7 { width: 68px; } .m8 { width: 100px; } .m9 { width: 147px; } .m10 { flex: 1; }

.toolrow { display: flex; flex: none; }
.row1 { height: 59px; } .row2 { height: 58px; } .row3 { height: 57px; }
.bar { position: relative; display: flex; align-items: center; background: linear-gradient(#fbfbfb, #eee); border-bottom: 2px solid #b8b8b8; padding-top: 2px; flex: none; }
.row1 .bar { border-bottom-width: 1px; margin-bottom: 1px; }
.row3 .bar { padding-top: 4px; }
.bar::after { content: ""; position: absolute; right: 0; bottom: -2px; width: 1px; height: 3px; background: #fafafa; }
.w321 { width: 320px; } .w816 { width: 816px; } .w138 { width: 138px; } .w93 { width: 93px; } .w669 { width: 669px; } .w74 { width: 74px; } .w25 { width: 26px; } .w76 { width: 75px; } .w1220 { width: 1219px; }
.grip { width: 7px; height: 26px; margin: 0 5px 0 8px; flex: none; background: radial-gradient(circle, #bbb 1px, transparent 1.300px) 0 0 / 5px 4.500px; }
.w321 .grip, .row3 .grip { margin-left: 7px; }
.lab .grip { margin-right: 3px; }
.cell { width: 49.600px; height: 48px; display: flex; align-items: center; justify-content: center; flex: none; }
.cell svg { width: 36px; height: 36px; }
.pressed { width: 47.600px; height: 46px; margin: 0 1px; border: 1px solid #aaa; border-radius: 3px; background: #dcdcdc; }
.dim { opacity: .4; filter: grayscale(.3); }
.faded { opacity: .6; }
.drop { width: 17.500px; display: flex; justify-content: center; flex: none; }
.row2 .drop { padding-right: 2px; }
.row3 .drop { padding-right: 4px; }
.drop svg { width: 12px; height: 7px; }
.more { margin: 0 5px 0 auto; }
.more svg { width: 13px; height: 10px; }

.work { height: 655px; display: flex; flex: none; }
.left { width: 383px; display: flex; flex-direction: column; flex: none; }
.docktitle { height: 33px; display: flex; align-items: center; padding: 0 2px 0 6px; flex: none; }
.docktitle span { flex: 1; padding-top: 3px; }
.docktitle .qms { letter-spacing: .2px; }
.docktitle .ngc { letter-spacing: .05px; }
.dbtn { width: 16px; height: 17px; margin-left: 5px; }
.mini { display: flex; align-items: center; padding-left: 12px; gap: 13.500px; flex: none; }
.mini svg { width: 24px; height: 24px; }
.mini .mdrop { margin: 0 -2px 0 -5px; }
.mini .mdrop svg { width: 12px; height: 7px; }
.browsertools { height: 44px; padding-bottom: 4px; }
.tree { height: 104px; border-top: 1px solid #aaa; border-left: 1px solid #ccc; background: #fff; display: flex; overflow: hidden; flex: none; }
.treelist { flex: 1; padding-top: 1px; }
.node { height: 27px; display: flex; align-items: center; }
.node svg { width: 24px; height: 24px; margin-right: 9px; }
.long { letter-spacing: -.1px; }
.tw { width: 7px; height: 12px; margin: 0 13px 0 9px; flex: none; }
.on { background: #555; clip-path: polygon(0 0, 100% 50%, 0 100%); }
.vscroll { width: 21px; display: flex; flex-direction: column; background: linear-gradient(90deg, #fff, #f2f2f2); border-left: 1px solid #ddd; }
.sbtn { height: 20px; background: #f8f8f8; display: flex; align-items: center; justify-content: center; flex: none; border-bottom: 1px solid #b4b4b4; }
.sbtn.down { border-bottom: 0; border-top: 1px solid #b4b4b4; height: 22px; }
.sbtn::after { content: ""; width: 12px; height: 6px; background: #555; clip-path: polygon(0 100%, 50% 0, 100% 100%); }
.down::after { clip-path: polygon(0 0, 100% 0, 50% 100%); }
.thumb { flex: 1; }
.sgap { height: 21px; background: #e3e3e3; border-top: 1px solid #bbb; }
.splitdots { height: 8px; flex: none; background: radial-gradient(circle, #bbb .9px, transparent 1.200px) 0 50% / 4.500px 5px repeat-x; margin: 0 176px 0 181px; }
.layertools { height: 44px; padding-bottom: 4px; }
.layerbox { height: 104px; background: #fff; border: 1px solid #bbb; border-width: 1px 0 0 1px; flex: none; }
.field { background: #fff; border: 1.500px solid #aeaeae; border-radius: 3px; display: flex; align-items: center; }
.geosearch { width: 384px; height: 32px; margin-top: -2px; padding-left: 3px; color: #808080; flex: none; }
.left .geosearch, .filters, .notice, .status { font-family: "Noto Sans", sans-serif; }
.geosearch span { letter-spacing: -.42px; font-size: 16.500px; }
.filters { display: flex; justify-content: flex-end; gap: 9px; margin: 10px -1px 0 0; height: 33px; flex: none; font-size: 16px; letter-spacing: -.1px; }
.button, .combo { border: 1.500px solid #aaa; border-radius: 3px; background: linear-gradient(#fdfdfd, #eee); display: flex; align-items: center; }
.button { width: 147px; justify-content: center; }
.combo { width: 108px; padding: 0 10px 0 6px; justify-content: space-between; }
.combo svg { width: 13px; height: 7px; }
.results { margin-top: 9px; height: 104px; border: 1px solid #b4b4b4; border-top: 0; flex: none; }
.restop { height: 82px; display: flex; }
.reslist { flex: 1; min-width: 0; overflow: hidden; background: #fff; }
.recent { height: 25px; line-height: 28px; padding-left: 5px; letter-spacing: -.12px; }
.service { height: 57px; background: #e8e6e2; display: flex; overflow: hidden; }
.map { width: 36px; height: 36px; margin: 39px 0 0 8px; }
.sname { width: 240px; margin: 15px 0 0 9px; font: bold 16px/21px "DejaVu Sans Condensed", "DejaVu Sans", sans-serif; letter-spacing: .32px; flex: none; }
.dot { width: 16px; height: 16px; border-radius: 50%; background: #008000; margin: 52px 12px 0 -8px; flex: none; }
.add { width: 100px; height: 33px; margin-top: 41px; border: 1px solid #aaa; border-radius: 3px; background: #f8f8f8; font: 15px/30px "Noto Sans", sans-serif; padding-left: 9px; flex: none; }
.short .thumb2 { flex: 1; background: #f6f6f6; }
.hscroll { height: 21px; display: flex; border-top: 1px solid #aaa; flex: none; }
.hb { width: 20px; background: #fafafa; display: flex; align-items: center; justify-content: center; flex: none; }
.hb::after { content: ""; width: 6px; height: 12px; background: #444; clip-path: polygon(0 50%, 100% 0, 100% 100%); }
.hb.r::after { clip-path: polygon(0 0, 100% 50%, 0 100%); }
.hthumb { border: 1px solid #b4b4b4; border-width: 0 1px; background: linear-gradient(#fff, #f4f4f4); flex: none; }
.w279 { width: 280px; } .w104 { width: 105px; }
.htrack { flex: 1; background: #e4e4e4; border-right: 1px solid #bbb; }
.corner { width: 21px; background: #efefef; }
.notice { margin-top: 6px; height: 51px; border: 1px solid #b8b8b8; border-top: 0; border-bottom-width: 2px; display: flex; align-items: center; padding-left: 51px; font-size: 16px; flex: none; }
.link { color: #00f; text-decoration: underline; margin: 0 5px 0 9px; letter-spacing: -.2px; }
.rest { letter-spacing: -.2px; }

.vdots { width: 10px; background: radial-gradient(circle, #bbb .9px, transparent 1.200px) 5px 322px / 5px 5px no-repeat, radial-gradient(circle, #bbb .9px, transparent 1.200px) 5px 328px / 5px 5px no-repeat, radial-gradient(circle, #bbb .9px, transparent 1.200px) 5px 334px / 5px 5px no-repeat, radial-gradient(circle, #bbb .9px, transparent 1.200px) 5px 340px / 5px 5px no-repeat; flex: none; }
.thin { width: 8px; background-position-x: 2px; }
.right { width: 10px; }
.recentp { width: 280px; display: flex; flex-direction: column; flex: none; }
h1 { margin: 0; height: 50px; font: bold 27px/50px "DejaVu Sans Condensed", "DejaVu Sans", sans-serif; overflow: hidden; flex: none; }
.h-a { padding-left: 14px; letter-spacing: -.04px; }
.h-b { padding-left: 12px; }
.box { background: #fff; border: 1px solid #b4b4b4; flex: 1; margin-bottom: -5px; }
.rbox { border-top: 0; }
.templates { width: 287px; display: flex; flex-direction: column; overflow: hidden; flex: none; height: 660px; }
.tbox { height: 588px; background: #fff; overflow: hidden; padding: 7px 0 0 8px; }
.card { width: 420px; height: 413px; border: 9px solid #efefef; border-top-width: 10px; border-radius: 16px; padding: 30px 0 0 30px; }
.tscroll { border-bottom: 1px solid #aaa; height: 22px; }
.connect { width: 390px; display: flex; flex-direction: column; flex: none; }
.connect .docktitle { padding-right: 3px; }
.ngtools { height: 56px; display: flex; align-items: center; padding: 0 0 4px 8px; }
.g1, .g2 { width: 34px; height: 34px; margin-right: 4px; }
.g3 { width: 36px; height: 34px; margin-right: 15px; }
.g4 { width: 34px; height: 36px; margin-right: 12px; }
.g5 { width: 36px; height: 36px; margin: 0 11px; }
.g6 { width: 36px; height: 36px; margin: 0 21px 0 11px; }
.g7 { width: 22px; height: 34px; }
.sep { width: 2px; height: 28px; background: #d8d8d8; flex: none; }
.s1 { margin-right: 12px; background: #fff; }

.status { flex: 1; display: flex; align-items: center; font-size: 16px; letter-spacing: -.2px; padding: 5px 0 0 6px; }
.sfind { width: 300px; height: 33px; padding-left: 12px; color: #808080; font-size: 16.500px; letter-spacing: -.05px; flex: none; }
.sfind svg { width: 20px; height: 20px; margin-right: 10px; }
.t { flex: none; overflow: hidden; padding-top: 1px; }
.coord { width: 38px; margin: 0 4px 0 60px; }
.cf { width: 42px; height: 33px; flex: none; }
.mouse { width: 24px; height: 24px; margin: 0 18px 0 6px; }
.scale { width: 31px; margin-right: 4px; display: flex; justify-content: flex-end; letter-spacing: -.7px; }
.scombo { width: 105px; height: 33px; padding-left: 4px; flex: none; letter-spacing: .3px; }
.scombo span, .spin span { flex: 1; padding-top: 1px; }
.scombo i { width: 31px; height: 30px; border-left: 1px solid #aaa; background: linear-gradient(#fdfdfd, #eee); display: flex; align-items: center; justify-content: center; }
.scombo i svg { width: 12px; height: 7px; }
.padlock { width: 20px; height: 24px; margin: 0 11px 0 17px; }
.zoomt { width: 37px; margin-right: 5px; letter-spacing: -.3px; }
.spin { height: 30px; padding-left: 6px; flex: none; letter-spacing: .6px; }
.spin.z { width: 126px; }
.spin.r { width: 126px; }
.spin i { width: 21px; height: 27px; border-left: 1px solid #aaa; background: #f6f6f6; display: flex; align-items: center; justify-content: center; }
.spin i svg { width: 12px; height: 20px; }
.rot { width: 11px; margin: 0 13px 0 12px; display: flex; justify-content: flex-end; letter-spacing: -1px; }
.check { width: 20px; height: 20px; border: 1px solid #aaa; background: #fff; margin: 0 7px 0 9px; display: flex; align-items: center; justify-content: center; flex: none; }
.check svg { width: 16px; height: 16px; }
.render { width: 82px; margin-right: 23px; }
.globe { width: 24px; height: 22px; }
.epsg { margin-left: 2px; width: 84px; letter-spacing: .1px; }
.bubble { width: 24px; height: 24px; margin-left: 32px; }
.sizegrip { width: 16px; height: 16px; margin: 20px 0 0 28px; }
```
